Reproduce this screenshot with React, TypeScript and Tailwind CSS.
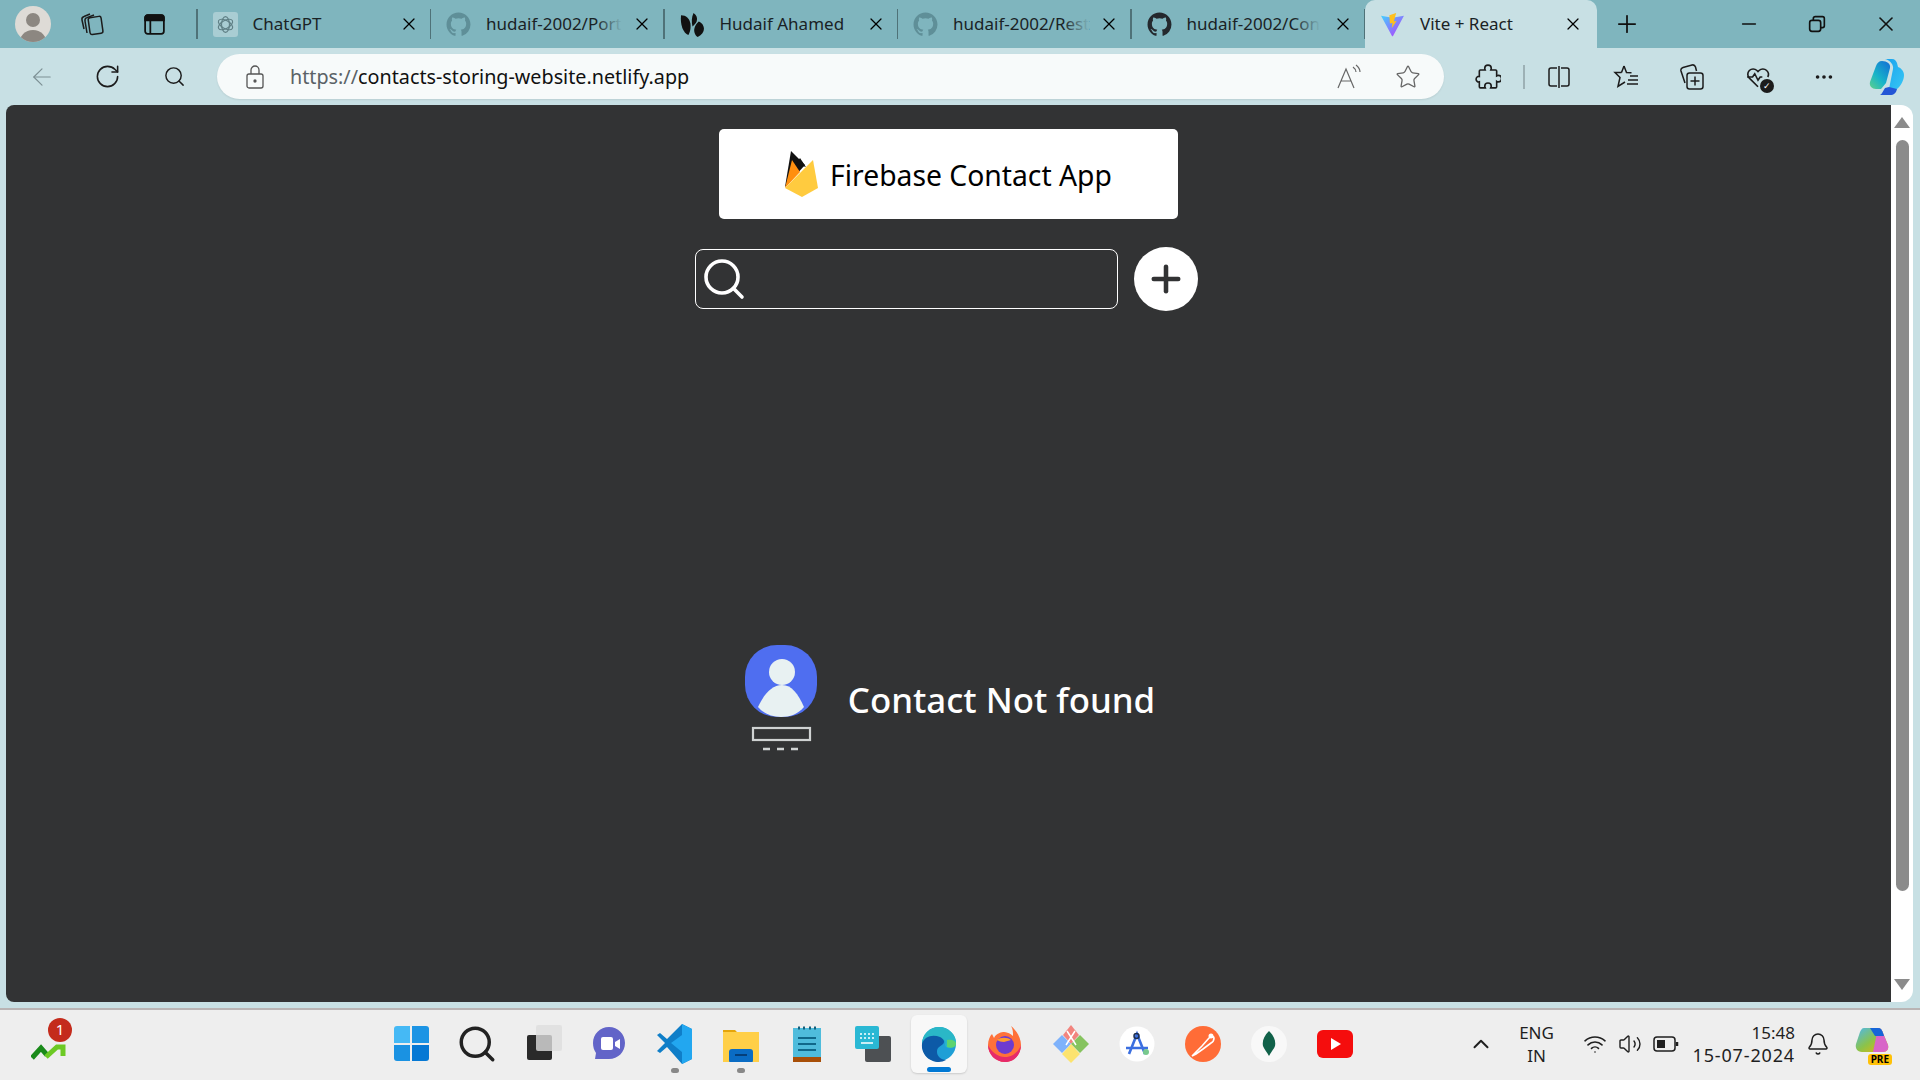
import { ArrowLeft, Bell, ChevronUp, Minus, Plus, RotateCw, Search, Star, Volume2, Wifi, X, MoreHorizontal } from 'lucide-react'

const GITHUB_PATH =
  'M12 .5C5.65.5.5 5.65.5 12c0 5.08 3.29 9.39 7.86 10.91.58.1.79-.25.79-.56v-2.14c-3.2.7-3.87-1.36-3.87-1.36-.52-1.33-1.28-1.69-1.28-1.69-1.04-.71.08-.7.08-.7 1.15.08 1.76 1.18 1.76 1.18 1.03 1.76 2.69 1.25 3.35.96.1-.75.4-1.25.73-1.54-2.55-.29-5.24-1.28-5.24-5.69 0-1.26.45-2.28 1.18-3.09-.12-.29-.51-1.46.11-3.05 0 0 .97-.31 3.17 1.18a11 11 0 0 1 5.77 0c2.2-1.49 3.17-1.18 3.17-1.18.62 1.59.23 2.76.11 3.05.74.81 1.18 1.83 1.18 3.09 0 4.42-2.69 5.39-5.25 5.68.41.36.78 1.06.78 2.14v3.17c0 .31.21.67.8.56A11.5 11.5 0 0 0 23.5 12C23.5 5.65 18.35.5 12 .5z'

function GithubIcon({ faded }: { faded: boolean }) {
  return (
    <svg viewBox="0 0 24 24" className="h-[25px] w-[25px] shrink-0" fill={faded ? '#5f8f98' : '#24292e'}>
      <path d={GITHUB_PATH} />
    </svg>
  )
}

function ChatGptIcon() {
  return (
    <div className="flex h-[25px] w-[25px] shrink-0 items-center justify-center rounded-[3px] bg-[#a9cdd3]">
      <svg viewBox="0 0 24 24" className="h-[19px] w-[19px]" fill="none" stroke="#5f7f85" strokeWidth="1.4">
        <ellipse cx="12" cy="12" rx="10" ry="5" transform="rotate(30 12 12)" />
        <ellipse cx="12" cy="12" rx="10" ry="5" transform="rotate(90 12 12)" />
        <ellipse cx="12" cy="12" rx="10" ry="5" transform="rotate(150 12 12)" />
      </svg>
    </div>
  )
}

function LeafIcon() {
  return (
    <svg viewBox="0 0 24 24" className="h-[25px] w-[25px] shrink-0" fill="#111">
      <path d="M1 3c5 0 8 3 9 8 .6 4-.4 9-2 11C3 20 0 12 1 3z" />
      <path d="M13 1c3 2 4 5 3 8-1 2-2 3-4 5-1-4-1-9 1-13z" />
      <path d="M18 9c3 1 5 4 5 7 0 3-2 6-6 8-3-2-4-6-3-9 .5-2 2-4 4-6z" />
    </svg>
  )
}

function ViteIcon({ size }: { size: number }) {
  return (
    <svg viewBox="0 0 24 24" width={size} height={size} className="shrink-0">
      <defs>
        <linearGradient id="vite1" x1="0" y1="0" x2="1" y2="1">
          <stop offset="0" stopColor="#41d1ff" />
          <stop offset="1" stopColor="#bd34fe" />
        </linearGradient>
      </defs>
      <path d="M1 3.5 12 5.5 23 3.5 12.5 23a.6.6 0 0 1-1 0z" fill="url(#vite1)" />
      <path d="M15.5 1 9 3l.5 8 2.5-.5-.7 5L16 8.5l-2.7.5z" fill="#ffc01e" />
    </svg>
  )
}

type TabProps = {
  icon: React.ReactNode
  title: string
  fade?: boolean
}

function Tab({ icon, title, fade }: TabProps) {
  return (
    <div className="flex h-[48px] w-[233.5px] shrink-0 items-center pl-[15px]">
      {icon}
      <div className="ml-[15px] w-[140px] whitespace-nowrap text-[17px] text-[#1a2225]">
        <span className="relative inline-block">
          {title}
          {fade && <span className="absolute inset-y-0 right-0 w-[26px] bg-gradient-to-r from-transparent to-[#7fb5be]" />}
        </span>
      </div>
      <X size={20} strokeWidth={1.5} className="ml-[6px] shrink-0 text-black" />
      <div className="ml-auto h-[30px] w-[1.5px] shrink-0 bg-[#4f7278]" />
    </div>
  )
}

function TabsCopyIcon() {
  return (
    <svg viewBox="0 0 26 26" width={26} height={26} className="ml-[28px] shrink-0" fill="none" stroke="#1c1c1c" strokeWidth="1.5">
      <rect x="10" y="6" width="13" height="17" rx="2" transform="rotate(-8 16 14)" />
      <path d="M8 22 6 10c-.3-2 .5-3 2-3.4L15 4" />
      <path d="M5 18 3 9c-.4-2 .5-3 2-3.5L11 3" />
    </svg>
  )
}

function CopilotIcon() {
  return (
    <svg viewBox="0 0 36 38" width={36} height={38} className="shrink-0">
      <defs>
        <linearGradient id="cop1" x1="0" y1="1" x2="0.8" y2="0">
          <stop offset="0" stopColor="#5fd08a" />
          <stop offset="0.45" stopColor="#19b5c8" />
          <stop offset="1" stopColor="#1477d4" />
        </linearGradient>
        <linearGradient id="cop2" x1="0" y1="0" x2="1" y2="1">
          <stop offset="0" stopColor="#19a3ee" />
          <stop offset="1" stopColor="#37c6f4" />
        </linearGradient>
      </defs>
      <path d="M16 1h7c3 0 4 2 5 4l1 4c3 1 6 4 6 8 0 5-3 11-7 14h-8l4-20c1-4-3-9-8-10z" fill="url(#cop2)" />
      <path d="M13 3c-3 0-5 2-6 5L1 24c-1 4 2 7 6 7h5l5-6 4-15c1-4-3-7-8-7z" fill="url(#cop1)" />
      <path d="M11 37h10c4 0 6-2 7-6l-8-2-4 1c-2 3-3 6-5 7z" fill="#2456d6" />
    </svg>
  )
}

function ToolIcon({ children }: { children: React.ReactNode }) {
  return <div className="flex h-[28px] w-[28px] shrink-0 items-center justify-center">{children}</div>
}

function Toolbar() {
  return (
    <div className="flex h-[57px] items-center bg-[#c8e0e4]">
      <div className="ml-[28px] flex w-[28px] justify-center">
        <ArrowLeft size={30} strokeWidth={1} className="text-[#7c8f93]" />
      </div>
      <div className="ml-[38px]">
        <RotateCw size={27} strokeWidth={1.4} className="text-[#1c1c1c]" />
      </div>
      <div className="ml-[42px]">
        <Search size={23} strokeWidth={1.5} className="text-[#1c1c1c]" />
      </div>
      <div className="ml-[31px] flex h-[45px] w-[1227px] shrink-0 items-center rounded-full bg-[#f7fafa] pl-[29px] pr-[23px] shadow-[0_1px_2px_rgba(0,0,0,0.08)]">
        <svg viewBox="0 0 18 24" width={18} height={24} fill="none" stroke="#555" strokeWidth="1.3" className="shrink-0">
          <path d="M5 9V5a4 4 0 0 1 8 0v4" />
          <rect x="1" y="9" width="16" height="14" rx="2" />
          <circle cx="9" cy="16" r="1" fill="#555" />
        </svg>
        <div className="ml-[26px] whitespace-nowrap text-[19.75px] text-[#111]">
          <span className="text-[#5a6266]">https://</span>contacts-storing-website.netlify.app
        </div>
        <div className="ml-auto flex items-center gap-[33px]">
          <svg viewBox="0 0 26 26" width={26} height={26} fill="none" stroke="#666" strokeWidth="1.2">
            <path d="M2 24 10 5l8 19M5 17h10" />
            <path d="M17 3c2 1.5 3 3 3 5M20 1c2.5 2 4 4 4 7" />
          </svg>
          <Star size={26} strokeWidth={1.2} className="text-[#666]" />
        </div>
      </div>
      <div className="ml-[30px] flex items-center text-[#1c1c1c]">
        <ToolIcon>
          <svg viewBox="0 0 24 24" width={26} height={26} fill="none" stroke="#1c1c1c" strokeWidth="1.5">
            <path d="M9 4a3 3 0 0 1 6 0c0 .6-.2 1-.4 1.5H19a1 1 0 0 1 1 1v4.500c.4-.2.9-.5 1.5-.5a3 3 0 0 1 0 6c-.6 0-1.1-.2-1.500-.5V21a1 1 0 0 1-1 1h-4.500c.2-.5.5-1 .5-1.500a3 3 0 0 0-6 0c0 .5.3 1 .5 1.500H5a1 1 0 0 1-1-1v-4.500c-1.500.5-3-1-3-2.500s1.500-3 3-2.500V6.500a1 1 0 0 1 1-1h4.400C9.200 5 9 4.600 9 4z" />
          </svg>
        </ToolIcon>
        <div className="ml-[21px] h-[24px] w-[2px] bg-[#9db1b5]" />
        <div className="ml-[20px]">
          <ToolIcon>
            <svg viewBox="0 0 24 24" width={24} height={24} fill="none" stroke="#1c1c1c" strokeWidth="1.5">
              <path d="M10 3H4a2 2 0 0 0-2 2v14a2 2 0 0 0 2 2h6M14 3h6a2 2 0 0 1 2 2v14a2 2 0 0 1-2 2h-6M12 1v22" />
            </svg>
          </ToolIcon>
        </div>
        <div className="ml-[39px]">
          <ToolIcon>
            <svg viewBox="0 0 26 26" width={26} height={26} fill="none" stroke="#1c1c1c" strokeWidth="1.5">
              <path d="M11 2l2.5 6.500 5 .3M8.500 8.500H2l5 5-2 9 7-4.500M11 2 8.500 8.500" />
              <path d="M17 12h8M15 16h10M14 20h11" />
            </svg>
          </ToolIcon>
        </div>
        <div className="ml-[38px]">
          <ToolIcon>
            <svg viewBox="0 0 26 26" width={26} height={26} fill="none" stroke="#1c1c1c" strokeWidth="1.5">
              <path d="M6 19 2 7c-.5-2 .5-3 2-3.500L13 1c2-.5 3 .5 3.500 2l1 4" />
              <rect x="8" y="9" width="16" height="16" rx="2.5" />
              <path d="M16 12.500v9M11.500 17h9" />
            </svg>
          </ToolIcon>
        </div>
        <div className="relative ml-[38px]">
          <ToolIcon>
            <svg viewBox="0 0 24 24" width={26} height={26} fill="none" stroke="#1c1c1c" strokeWidth="1.5">
              <path d="M12 21 4 13a5 5 0 0 1 0-7 5 5 0 0 1 7 0l1 1 1-1a5 5 0 0 1 7 0 5 5 0 0 1 1 6" />
              <path d="M2 12h5l2-3 3 6 2-3h2" />
            </svg>
          </ToolIcon>
          <div className="absolute bottom-[-2px] right-[-2px] flex h-[14px] w-[14px] items-center justify-center rounded-full bg-[#1c1c1c] text-[9px] leading-none text-white">✓</div>
        </div>
        <div className="ml-[38px]">
          <ToolIcon><MoreHorizontal size={22} strokeWidth={2} /></ToolIcon>
        </div>
        <div className="ml-[31px]"><CopilotIcon /></div>
      </div>
    </div>
  )
}

function FirebaseLogo() {
  return (
    <svg viewBox="0 0 33 46" width={33} height={46} className="shrink-0">
      <path d="M6 0 0 36 20 14z" fill="#111" />
      <path d="M15 7 11 13l10 3z" fill="#111" />
      <path d="M0 37 7 9l8 12z" fill="#ff8f0f" />
      <path d="M0 37 28 9l5 28-16 9z" fill="#ffcb3f" />
    </svg>
  )
}

function ContactNotFoundIcon() {
  return (
    <svg viewBox="0 0 72 108" width={72} height={108} className="shrink-0">
      <rect x="0" y="0" width="72" height="72" rx="32" fill="#4f6ef0" />
      <circle cx="37" cy="27" r="13" fill="#e8f1f2" />
      <path d="M13 62c6-13 14-22 24-22s16 9 22 22c-6 7-14 10-23 10s-17-3-23-10z" fill="#e8f1f2" />
      <rect x="8" y="83" width="57" height="12" fill="none" stroke="#cfd2d2" strokeWidth="2.2" />
      <path d="M18 104h7M32 104h7M46 104h7" stroke="#cfd2d2" strokeWidth="2.5" />
    </svg>
  )
}

function Page() {
  return (
    <div className="flex h-[897px] bg-[#c8e0e4] pl-[6px] pr-[7px]">
      <div className="flex min-w-0 flex-1 flex-col items-center rounded-l-[8px] bg-[#323334] pt-[24px]">
        <div className="flex h-[90px] w-[459px] items-center justify-center gap-[12px] rounded-[5px] bg-white">
          <FirebaseLogo />
          <span className="pt-[2px] text-[28.3px] text-black">Firebase Contact App</span>
        </div>
        <div className="mr-[4px] mt-[28px] flex items-center gap-[16px]">
          <div className="flex h-[60px] w-[423px] items-center rounded-[8px] border border-white pl-[4px]">
            <Search size={48} strokeWidth={1.8} className="text-white" />
          </div>
          <div className="flex h-[64px] w-[64px] items-center justify-center rounded-full bg-white">
            <Plus size={42} strokeWidth={2.6} className="text-[#323334]" />
          </div>
        </div>
        <div className="ml-[3px] mt-[334px] flex items-center gap-[31px]">
          <ContactNotFoundIcon />
          <span className="pt-[2px] text-[34.8px] font-medium text-white">Contact Not found</span>
        </div>
      </div>
      <div className="flex w-[22px] shrink-0 flex-col items-center rounded-r-[12px] bg-white py-[12px]">
        <div className="h-0 w-0 border-x-[8px] border-b-[11px] border-x-transparent border-b-[#8b8b8b]" />
        <div className="mt-[12px] h-[751px] w-[13px] rounded-full bg-[#8b8b8b]" />
        <div className="mt-auto h-0 w-0 border-x-[8px] border-t-[11px] border-x-transparent border-t-[#8b8b8b]" />
      </div>
    </div>
  )
}

function WindowsLogo() {
  return (
    <div className="grid h-[35px] w-[35px] grid-cols-2 gap-[2px]">
      <div className="rounded-tl-[3px] bg-[#45b9f5]" />
      <div className="rounded-tr-[3px] bg-[#1c94e4]" />
      <div className="rounded-bl-[3px] bg-[#1a92e2]" />
      <div className="rounded-br-[3px] bg-[#0578d4]" />
    </div>
  )
}

function TaskItem({ children, dot, active }: { children: React.ReactNode; dot?: boolean; active?: boolean }) {
  return (
    <div className="flex w-[66px] shrink-0 justify-center">
      <div className={`relative flex h-[58px] w-[56px] items-center justify-center rounded-[6px] ${active ? 'bg-[#f8f8f8] shadow-[0_1px_2px_rgba(0,0,0,0.15)]' : ''}`}>
        {children}
        {dot && <div className="absolute bottom-0 h-[5px] w-[8px] rounded-full bg-[#888]" />}
        {active && <div className="absolute bottom-[1px] h-[5px] w-[24px] rounded-full bg-[#0078d4]" />}
      </div>
    </div>
  )
}

function Taskbar() {
  return (
    <div className="flex h-[72px] items-center border-t-2 border-[#b9b4b4] bg-[#eeeeee] pb-[3px]">
      <div className="relative ml-[31px] h-[40px] w-[40px]">
        <svg viewBox="0 0 36 24" width={36} height={24} className="absolute bottom-0 left-0">
          <path d="M1 18 10 8l6 7" fill="none" stroke="#1a8a1a" strokeWidth="5" />
          <path d="M15 17 26 7h6v9" fill="none" stroke="#6cc924" strokeWidth="5" />
        </svg>
        <div className="absolute left-[17px] top-[-6px] flex h-[24px] w-[24px] items-center justify-center rounded-full bg-[#c42b1c] text-[15px] text-white">1</div>
      </div>
      <div className="ml-[307px] flex items-center">
        <TaskItem><WindowsLogo /></TaskItem>
        <TaskItem><Search size={42} strokeWidth={2} className="text-[#222]" /></TaskItem>
        <TaskItem>
          <div className="relative h-[32px] w-[32px]">
            <div className="absolute bottom-0 left-0 h-[25px] w-[25px] rounded-[2px] bg-[#2a2a2a]" />
            <div className="absolute right-[-3px] top-[-3px] h-[26px] w-[26px] rounded-[2px] bg-[#dddddd]/80" />
          </div>
        </TaskItem>
        <TaskItem>
          <svg viewBox="0 0 36 36" width={36} height={36}>
            <path d="M18 1c9 0 16 7 16 16s-7 16-16 16H4l1-6C3 24 2 21 2 17 2 8 9 1 18 1z" fill="#6264c8" />
            <rect x="10" y="11" width="12" height="13" rx="2" fill="#fff" />
            <path d="m24 16 5-3v10l-5-3z" fill="#fff" />
          </svg>
        </TaskItem>
        <TaskItem dot>
          <svg viewBox="0 0 36 42" width={36} height={42}>
            <path d="M25 1 35 6v30l-10 5L10 24 3 30l-3-2 8-8-8-8 3-2 7 6z" fill="#0f7ec8" />
            <path d="M25 1 35 6v30l-10 5z M25 12 14 20l11 9z" fill="#22a7f0" fillRule="evenodd" />
          </svg>
        </TaskItem>
        <TaskItem dot>
          <svg viewBox="0 0 36 36" width={36} height={36}>
            <path d="M0 4h12l3 3h21v4H0z" fill="#e5a50a" />
            <rect y="6" width="36" height="30" fill="#ffcf48" />
            <rect x="6" y="23" width="24" height="14" rx="3" fill="#0a6cc4" />
            <rect x="12" y="28" width="12" height="2" fill="#053f7a" />
          </svg>
        </TaskItem>
        <TaskItem>
          <svg viewBox="0 0 30 36" width={30} height={36}>
            <rect x="1" y="2" width="28" height="29" fill="#4fbcdc" />
            <rect x="1" y="31" width="28" height="5" fill="#a84f08" />
            <path d="M6 2h2M11 2h2M17 2h2M22 2h2" stroke="#14607c" strokeWidth="3" />
            <path d="M6 12h18M6 18h18M6 24h18" stroke="#10688a" strokeWidth="2" />
          </svg>
        </TaskItem>
        <TaskItem>
          <div className="relative h-[36px] w-[36px]">
            <div className="absolute bottom-0 right-0 h-[26px] w-[26px] rounded-[2px] bg-[#4d5053]" />
            <svg viewBox="0 0 24 23" width={24} height={23} className="absolute left-0 top-0">
              <rect width="24" height="23" rx="2" fill="#2ab8d4" />
              <path d="M5 8h2M9 8h2M13 8h2M17 8h2M5 12h2M9 12h2M13 12h2M17 12h2M6 17h12" stroke="#fff" strokeWidth="1.7" />
            </svg>
          </div>
        </TaskItem>
        <TaskItem active>
          <svg viewBox="0 0 36 36" width={36} height={36}>
            <circle cx="18" cy="18" r="17" fill="#1f9fd6" />
            <path d="M18 1c10 0 17 8 17 15 0 6-7 7-10 5-2-2 0-4-1-6-2-3-10-3-14 3C7 24 11 33 20 35 8 37 1 28 1 18 1 8 9 1 18 1z" fill="#2ab7c7" />
            <path d="M1 18C3 10 12 8 19 11c4 2 5 5 3 7-3 3-6 3-6 8 0 4 4 8 9 8-2 1-5 2-7 2C8 36 0 28 1 18z" fill="#0d5aa7" />
            <path d="M26 14c5-1 9 1 9 4 0 3-5 5-9 3z" fill="#5dd36f" />
          </svg>
        </TaskItem>
        <TaskItem>
          <svg viewBox="0 0 36 38" width={36} height={38}>
            <path d="M24 1c6 5 10 12 10 19 0 9-7 17-16 17S1 29 1 20c0-5 2-9 4-11l2 4c2-5 8-6 10-6 5 0 9 4 9 4 0-4 0-7-2-10z" fill="#ff7139" />
            <path d="M1 20c0 9 7 17 17 17s16-8 16-17c-2 6-8 12-16 12S4 26 1 20z" fill="#e62a6a" />
            <circle cx="18" cy="20" r="9" fill="#6e3bd0" />
            <path d="M10 15c3-3 11-3 14 0-2 1-5 1-7 2-3 0-5-1-7-2z" fill="#ff9a2e" />
          </svg>
        </TaskItem>
        <TaskItem>
          <svg viewBox="0 0 36 38" width={36} height={38}>
            <path d="M18 0 26 10 18 19 10 10z" fill="#f2847e" />
            <path d="M9 10 18 19 9 28 0 19z" fill="#7eb2fb" />
            <path d="M27 10 36 19 27 28 18 19z" fill="#86c35f" />
            <path d="M18 19 27 29 18 38 9 29z" fill="#fce36f" />
            <path d="M14 6 23 20M22 6 13 20" stroke="#fff" strokeWidth="1.5" />
          </svg>
        </TaskItem>
        <TaskItem>
          <svg viewBox="0 0 36 36" width={36} height={36}>
            <circle cx="18" cy="18" r="17.5" fill="#fff" />
            <path d="M10 28 18 8l8 20M7 22h22" fill="none" stroke="#3b6fe0" strokeWidth="2.6" />
            <circle cx="17.5" cy="10" r="2.5" fill="none" stroke="#1a2c50" strokeWidth="1.5" />
            <circle cx="27" cy="26" r="3" fill="#78c98d" />
          </svg>
        </TaskItem>
        <TaskItem>
          <svg viewBox="0 0 36 36" width={36} height={36}>
            <circle cx="18" cy="18" r="18" fill="#ff6c37" />
            <path d="M7 30 17 20l7-8c2-2 5-2 5 0s-1 4-3 5l-8 6-7 5z" fill="none" stroke="#fff" strokeWidth="1.6" />
            <circle cx="26" cy="10" r="2.5" fill="#fff" />
          </svg>
        </TaskItem>
        <TaskItem>
          <svg viewBox="0 0 36 36" width={36} height={36}>
            <circle cx="18" cy="18" r="18" fill="#f8f8f8" />
            <path d="M18 5c5 5 7 10 6 15-1 3-4 6-6 10-2-4-5-7-6-10-1-5 1-10 6-15z" fill="#116149" />
          </svg>
        </TaskItem>
        <TaskItem>
          <div className="flex h-[28px] w-[36px] items-center justify-center rounded-[6px] bg-[#f50d0d]">
            <div className="ml-[2px] h-0 w-0 border-y-[6px] border-l-[10px] border-y-transparent border-l-white" />
          </div>
        </TaskItem>
      </div>
      <div className="ml-auto flex items-center text-[#1f1f1f]">
        <ChevronUp size={26} strokeWidth={1.8} />
        <div className="ml-[25px] flex w-[36px] flex-col items-center text-[17px] leading-[23px]">
          <span>ENG</span>
          <span>IN</span>
        </div>
        <div className="ml-[28px] flex items-center gap-[11px]">
          <Wifi size={24} strokeWidth={1.6} />
          <Volume2 size={24} strokeWidth={1.4} />
          <svg viewBox="0 0 26 18" width={26} height={18} fill="none" stroke="#1f1f1f" strokeWidth="1.5">
            <rect x="1" y="2" width="21" height="14" rx="3" />
            <rect x="4" y="5" width="8" height="8" fill="#1f1f1f" stroke="none" />
            <path d="M24 7v4" strokeWidth="2.5" />
          </svg>
        </div>
        <div className="ml-[14px] flex flex-col items-end leading-[23px]">
          <span className="text-[17px]">15:48</span>
          <span className="text-[18px] tracking-[0.85px]">15-07-2024</span>
        </div>
        <Bell size={24} strokeWidth={1.5} className="ml-[11px]" />
        <div className="relative ml-[24px] mr-[30px] h-[36px] w-[36px]">
          <svg viewBox="0 0 36 36" width={36} height={36}>
            <defs>
              <linearGradient id="pre1" x1="0" y1="0" x2="1" y2="1">
                <stop offset="0" stopColor="#4db8f0" />
                <stop offset="0.5" stopColor="#8bc34a" />
                <stop offset="1" stopColor="#f4b400" />
              </linearGradient>
            </defs>
            <path d="M10 2h14c3 0 4 2 5 5l5 12c1 4-1 7-5 7H8c-5 0-7-4-6-8l4-12c1-2 2-4 4-4z" fill="url(#pre1)" />
            <path d="M24 2c3 0 4 2 5 5l5 12c1 4-1 7-5 7H19z" fill="#d866c8" />
            <path d="M16 2h8c3 0 4 2 5 5l1 3h-9z" fill="#1565d8" />
          </svg>
          <div className="absolute bottom-[-3px] right-[-2px] rounded-[3px] bg-[#ffc107] px-[3px] text-[10px] font-bold leading-[11px] text-black">PRE</div>
        </div>
      </div>
    </div>
  )
}

export default function App() {
  return (
    <div className="flex h-[1080px] w-[1920px] flex-col overflow-hidden font-['Noto_Sans','Open_Sans',sans-serif]">
      <div className="flex h-[48px] items-center bg-[#7fb5be]">
        <div className="ml-[15px] flex h-[36px] w-[36px] shrink-0 items-end justify-center overflow-hidden rounded-full bg-[#dedbd6]">
          <div className="relative h-[30px] w-[30px]">
            <div className="absolute left-[8px] top-[1px] h-[14px] w-[14px] rounded-full bg-[#8c8781]" />
            <div className="absolute bottom-[-8px] left-[1px] h-[20px] w-[28px] rounded-t-full bg-[#8c8781]" />
          </div>
        </div>
        <TabsCopyIcon />
        <svg viewBox="0 0 24 24" width={25} height={25} className="ml-[37px] shrink-0" fill="none" stroke="#111" strokeWidth="1.7">
          <rect x="3" y="3" width="18" height="18" rx="2.5" />
          <path d="M3 5.5a2.5 2.5 0 0 1 2.5-2.5h13A2.5 2.5 0 0 1 21 5.5V8H3z" fill="#111" />
          <path d="M8 8v13" />
        </svg>
        <div className="ml-[29px] h-[30px] w-[1.5px] shrink-0 bg-[#4f7278]" />
        <Tab icon={<ChatGptIcon />} title="ChatGPT" />
        <Tab icon={<GithubIcon faded />} title="hudaif-2002/Port" fade />
        <Tab icon={<LeafIcon />} title="Hudaif Ahamed" />
        <Tab icon={<GithubIcon faded />} title="hudaif-2002/Rest" fade />
        <Tab icon={<GithubIcon faded={false} />} title="hudaif-2002/Con" fade />
        <div className="relative flex h-[48px] w-[232px] shrink-0 items-center rounded-t-[10px] bg-[#c8e0e4] pl-[15px] pr-[14px]">
          <ViteIcon size={25} />
          <span className="ml-[15px] whitespace-nowrap text-[17px] text-[#1a2225]">Vite + React</span>
          <X size={20} strokeWidth={1.5} className="ml-auto text-black" />
        </div>
        <Plus size={28} strokeWidth={1.5} className="ml-[16px] shrink-0 text-[#111]" />
        <div className="ml-auto flex items-center">
          <Minus size={22} strokeWidth={1.6} className="text-[#111]" />
          <svg viewBox="0 0 24 24" width={22} height={22} className="ml-[46px]" fill="none" stroke="#111" strokeWidth="1.8">
            <rect x="4" y="8" width="12" height="12" rx="2.5" />
            <path d="M8 8V6a2 2 0 0 1 2-2h8a2 2 0 0 1 2 2v8a2 2 0 0 1-2 2h-2" />
          </svg>
          <X size={24} strokeWidth={1.6} className="ml-[46px] mr-[22px] text-[#111]" />
        </div>
      </div>
      <Toolbar />
      <Page />
      <div className="h-[6px] shrink-0 bg-[#c8e0e4]" />
      <Taskbar />
    </div>
  )
}
